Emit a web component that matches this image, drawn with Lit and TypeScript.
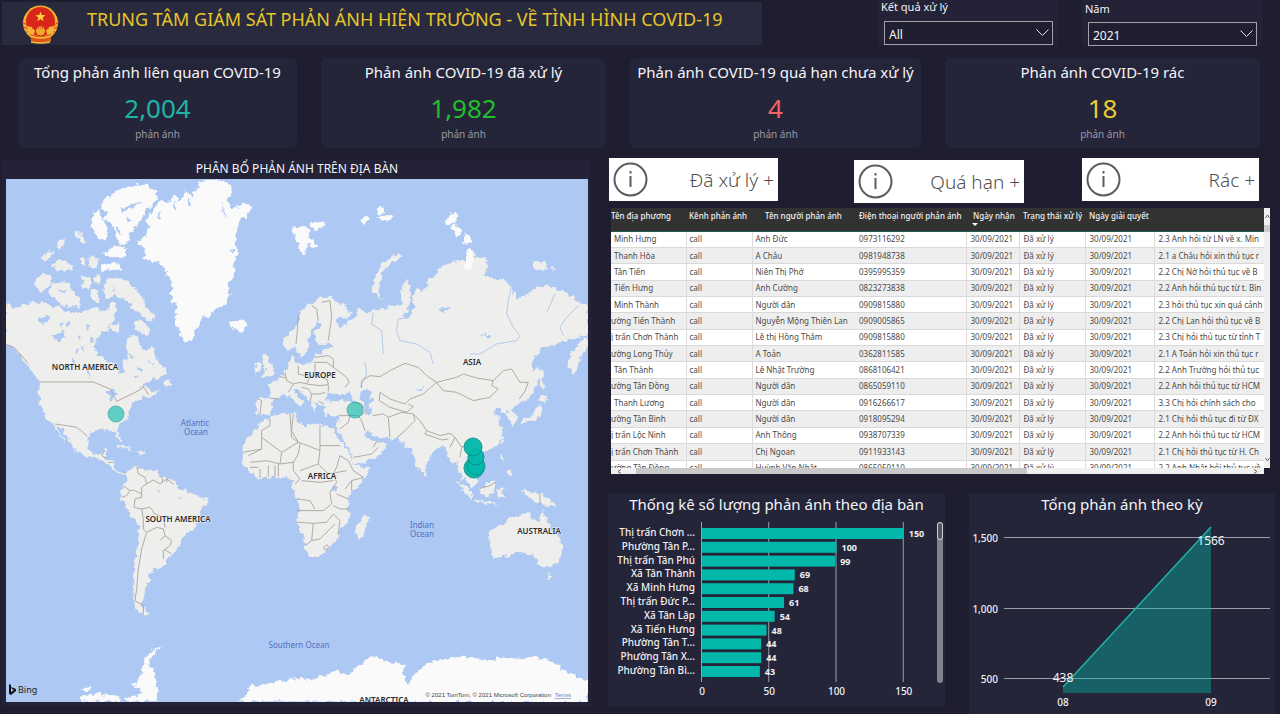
import { LitElement, html, svg, css } from "lit";
import { customElement } from "lit/decorators.js";
import { classMap } from "lit/directives/class-map.js";

/* Coastlines in map tile units (three units to one pixel of the map view). */
const LAND: string[] = [
  // North and Central America
  "18,445 30,452 45,465 60,455 80,450 100,440 115,450 135,445 160,460 175,455 195,470 225,478 250,472 285,462 305,475 320,470 330,445 345,450 350,470 340,500 330,515 320,530 300,545 285,560 283,590 300,605 325,620 345,635 360,660 372,655 370,635 368,620 385,605 380,585 375,570 385,550 405,545 415,555 425,580 440,590 455,575 462,590 465,610 480,630 498,640 500,658 480,670 455,678 430,690 415,705 432,698 450,700 448,715 470,710 480,712 460,725 440,730 430,725 415,735 400,745 392,760 385,775 388,785 378,795 365,805 355,815 352,830 358,840 364,855 360,860 345,832 325,825 300,827 275,835 268,845 262,860 265,885 285,903 305,900 315,883 325,880 322,897 315,913 330,917 345,920 348,930 342,940 352,953 370,957 380,953 378,962 365,963 350,955 335,940 325,930 300,920 280,913 255,905 235,895 220,880 215,870 200,850 190,830 180,818 172,812 172,825 185,850 198,866 192,864 176,842 160,812 145,795 128,772 118,745 115,715 120,687 100,660 85,640 70,622 60,600 40,580 18,570",
  // South America
  "380,953 395,943 410,935 418,945 430,943 470,950 480,965 505,972 520,978 535,1000 560,1013 600,1025 620,1037 618,1052 600,1075 595,1100 585,1122 560,1138 545,1152 540,1172 524,1192 512,1208 500,1213 495,1235 480,1243 465,1245 463,1257 446,1262 450,1278 435,1298 440,1312 430,1328 424,1348 435,1368 450,1380 430,1382 410,1370 402,1335 400,1295 403,1255 410,1205 415,1155 420,1115 400,1092 385,1070 372,1048 360,1030 362,1015 372,995 380,975",
  // Europe and Asia
  "990,430 1010,445 1040,460 1055,480 1045,492 1015,490 1005,500 1020,520 1035,512 1045,500 1060,495 1075,482 1070,465 1085,470 1100,478 1125,465 1150,458 1165,470 1160,455 1180,455 1200,455 1208,420 1205,395 1220,378 1230,395 1232,430 1228,460 1210,490 1225,492 1245,465 1238,420 1250,400 1265,410 1280,398 1285,375 1310,365 1315,345 1340,330 1375,320 1395,322 1420,308 1440,310 1460,315 1462,345 1450,365 1480,375 1510,375 1535,392 1550,435 1560,430 1590,420 1605,400 1635,395 1665,400 1690,415 1715,425 1735,445 1764,448 1764,540 1740,550 1700,560 1660,575 1630,580 1610,605 1590,630 1600,650 1618,640 1622,660 1605,700 1590,730 1560,745 1545,755 1532,768 1550,780 1552,800 1540,815 1527,797 1525,778 1505,772 1490,762 1478,780 1500,785 1495,805 1508,830 1506,850 1495,870 1470,885 1440,893 1425,898 1410,895 1402,910 1412,935 1428,955 1432,980 1415,1000 1402,985 1392,968 1388,990 1408,1005 1412,1022 1402,1020 1388,1000 1382,960 1370,925 1355,925 1345,905 1340,880 1325,875 1300,895 1285,915 1275,945 1262,957 1250,940 1240,910 1235,880 1222,882 1205,865 1190,855 1165,852 1130,848 1110,838 1095,835 1100,848 1115,860 1135,862 1160,870 1150,890 1125,910 1080,930 1065,930 1055,905 1040,875 1020,840 1010,822 1010,815 1018,795 1018,778 1005,785 985,785 972,770 968,752 955,748 942,745 952,762 945,775 935,757 925,737 905,717 893,703 880,705 888,722 910,740 905,750 898,757 880,738 865,722 850,718 832,735 815,745 820,762 805,780 785,783 768,775 772,730 785,728 808,732 812,710 800,692 812,684 830,680 840,668 855,655 865,640 868,612 880,606 885,625 900,630 930,628 945,612 945,600 965,600 975,582 1000,578 985,568 960,574 942,555 945,530 965,512 950,505 935,530 925,560 925,590 905,612 890,590 885,572 870,592 852,582 848,560 865,540 885,525 895,500 900,475 925,450 955,435",
  // Africa
  "800,795 815,785 850,780 885,775 892,800 905,810 920,820 940,807 965,812 1000,818 1008,842 1030,870 1050,905 1065,930 1075,942 1108,935 1105,955 1085,985 1060,1010 1045,1030 1045,1060 1050,1085 1040,1110 1017,1125 1015,1150 1000,1170 975,1195 955,1208 930,1210 920,1195 915,1165 900,1130 888,1100 897,1070 893,1040 885,1020 873,1000 878,985 860,970 830,972 800,970 780,975 760,965 745,950 725,925 728,900 728,875 745,850 765,830 780,805",
  // Australia, Tasmania, New Guinea
  "1465,1135 1490,1120 1515,1110 1530,1090 1555,1085 1570,1075 1595,1075 1590,1090 1615,1105 1627,1070 1640,1095 1650,1120 1675,1145 1690,1175 1680,1210 1665,1237 1635,1240 1615,1230 1600,1205 1585,1200 1560,1193 1530,1205 1500,1210 1480,1213 1475,1190 1466,1160",
  "1640,1258 1660,1260 1650,1280",
  "1565,1008 1590,1015 1620,1017 1650,1035 1670,1060 1640,1053 1610,1045 1585,1030",
  // South-east Asian islands
  "1438,1005 1460,995 1475,975 1490,985 1480,1015 1465,1025 1445,1020",
  "1360,973 1385,995 1420,1025 1418,1035 1390,1015",
  "1420,1038 1470,1045 1500,1055 1460,1050 1425,1045",
  "1495,1005 1515,1003 1505,1015 1510,1030 1498,1028",
  "1502,900 1512,905 1510,923 1502,917",
  "1520,950 1535,950 1535,965 1520,963",
  "1503,857 1510,863 1505,873",
  "1273,950 1282,958 1278,968 1272,962",
  // Madagascar
  "1100,1080 1105,1095 1090,1145 1075,1153 1065,1135 1072,1110 1090,1090",
  // British Isles
  "790,595 805,605 808,625 820,640 825,655 810,668 785,668 800,650 790,635 785,610",
  "768,630 785,630 780,655 765,658",
  // Novaya Zemlya, New Siberian Islands, Kamchatka, Sakhalin, Japan
  "1195,298 1210,305 1180,325 1152,345 1142,380 1135,415 1155,440 1140,430 1115,410 1128,360 1150,325",
  "1600,325 1635,320 1640,340 1615,350 1600,340",
  "1650,338 1670,345 1660,352",
  "1764,545 1745,560 1710,600 1705,640 1718,662 1730,640 1750,600 1764,575",
  "1615,645 1628,655 1632,690 1628,710 1620,680",
  "1620,720 1645,730 1630,747 1618,740",
  "1620,750 1627,770 1610,797 1585,802 1560,812 1565,798 1595,790 1610,765",
  // Canadian Arctic islands
  "115,360 145,360 160,380 140,405 120,415 108,390",
  "150,395 175,385 205,380 215,410 240,435 235,460 205,455 185,455 165,430 145,420",
  "245,370 270,370 270,410 250,400",
  "280,365 305,365 300,390 280,385",
  "275,400 295,410 295,445 275,440",
  "315,375 345,370 385,380 400,400 430,430 440,460 465,490 445,500 425,480 400,465 375,435 345,425 320,435 312,410",
  "400,510 420,495 450,520 440,545 410,530",
  "330,515 355,510 355,535 335,530",
  "225,235 245,240 265,270 240,270",
  "175,260 195,255 195,275 175,285",
  "125,315 145,290 160,290 150,315 130,325",
  "155,330 185,315 215,330 220,350 175,352",
  "240,310 255,310 260,335 240,330",
  "265,310 290,310 290,345 270,345",
  // Newfoundland, Cuba, Hispaniola
  "490,685 505,675 518,692 495,698",
  "345,873 375,873 400,890 375,884",
  "405,890 435,893 430,900",
];

const ICE: string[] = [
  // Greenland
  "440,200 460,165 490,130 500,150 520,125 540,140 560,110 575,130 600,82 650,74 690,90 697,120 680,140 700,165 735,145 755,158 735,190 712,210 705,260 715,300 700,340 705,370 680,385 692,420 670,455 640,470 610,495 590,520 575,560 555,565 540,540 525,495 530,450 512,440 520,400 510,385 495,345 475,325 430,315 440,295 410,265 440,245 450,215",
  // Ellesmere, Axel Heiberg, Devon
  "300,150 330,125 360,105 400,93 440,92 470,110 468,140 450,160 430,180 410,215 390,235 385,265 360,275 345,240 335,210 310,190 325,180",
  "280,180 295,165 310,200 325,230 320,260 295,255 275,220",
  "310,300 345,275 375,280 375,310 330,310",
  "300,335 360,325 365,350 305,350",
  // Iceland
  "690,505 705,500 735,500 742,515 725,530 705,528 692,515",
  // Svalbard and Franz Josef Land
  "880,220 910,215 930,225 925,250 940,260 955,280 935,285 925,260 915,300 900,290 885,250",
  "930,205 970,200 970,220 945,235",
  "1080,200 1105,185 1112,195 1090,210",
  "1130,165 1150,160 1155,175 1135,180",
  "1130,190 1160,180 1185,185 1165,200 1140,205",
  // Severnaya Zemlya
  "1348,175 1370,175 1373,200 1355,210 1338,210",
  "1355,215 1380,215 1385,240 1370,245 1355,230",
  "1395,240 1415,245 1410,270 1385,268",
  "1400,290 1415,285 1425,300 1415,340 1395,345",
  // Antarctica
  "495,1470 470,1490 450,1515 447,1535 462,1560 470,1595 475,1642 370,1642 400,1625 425,1620 420,1600 395,1595 410,1580 430,1555 425,1540 435,1515 455,1490",
  "240,1642 245,1625 300,1620 350,1625 360,1642",
  "245,1602 270,1600 272,1610 250,1612",
  "715,1642 740,1625 755,1590 765,1600 790,1590 830,1585 860,1575 900,1573 940,1577 1010,1550 1045,1565 1060,1545 1100,1518 1115,1508 1140,1510 1150,1520 1215,1535 1210,1570 1225,1590 1245,1560 1290,1525 1330,1515 1390,1508 1450,1515 1480,1520 1510,1508 1560,1515 1600,1508 1650,1522 1690,1545 1730,1570 1764,1580 1764,1645",
];

const WATER: string[] = [
  "975,737 985,718 1010,713 1022,727 1035,720 1045,714 1060,730 1066,745 1040,740 1005,742",
  "1085,712 1100,704 1116,710 1105,722 1120,740 1108,752 1118,780 1098,782 1090,755 1078,730",
  "320,712 335,705 352,720 340,728 335,745 325,740 328,720",
  "110,490 150,488 145,508 122,505",
  "155,548 190,530 200,548 172,562",
  "250,625 262,640 275,672 262,660",
  "995,995 1010,993 1012,1005 998,1012",
  "1315,465 1345,458 1350,468 1325,475",
  "1445,540 1475,545 1465,555",
  "1245,705 1270,700 1265,710",
  "385,600 400,606 395,618",
  "410,640 430,645 420,655",
  "455,625 470,632 460,640",
  "470,1010 485,1014 478,1018",
  "535,1025 545,1033 540,1036",
  "200,500 212,510 204,518",
  "235,540 246,552 238,560",
  "260,505 270,520 262,528",
  "225,580 238,590 228,598",
  "180,505 192,508 186,520",
  "215,610 228,620 220,630",
  "245,575 256,580 250,592",
  "270,548 280,556 272,566",
  "405,665 418,668 410,676",
  "440,615 450,620 444,628",
  // Inlets of the Arctic islands and the Greenland coast
  "360,165 400,150 432,140 402,158 366,174",
  "345,215 358,228 362,245 352,232",
  "380,190 402,196 384,200",
  "470,190 484,168 480,192",
  "520,160 526,142 530,162",
  "560,150 566,130 570,152",
  "665,140 672,170 680,195 668,176",
  "705,285 690,292 706,296",
  "170,400 190,412 205,408 190,420",
  "340,395 348,408 344,418",
];

const RIVERS: string[] = [
  "1225,492 1195,495 1190,530 1200,560 1250,570 1290,595 1300,630",
  "1535,395 1525,440 1520,480 1540,520 1560,545 1550,560 1490,570 1440,600 1410,600",
  "1095,625 1100,660 1080,700",
  "1120,475 1115,510 1145,530 1150,600",
  "1735,455 1700,490 1680,520 1690,545",
  "1665,420 1650,455 1640,475",
];

const BORDERS: string[] = [
  "118,684 280,684 330,705 350,742 400,718 432,700 445,722",
  "20,572 42,580 60,600 84,628",
  "165,810 200,815 230,820 250,835 262,848",
  "315,890 305,905 318,912 M340,925 325,925 M372,952 375,960",
  "410,938 415,960 435,970 440,990 425,1000 425,1030 405,1035 402,1060 425,1065 430,1095 430,1125 440,1135 470,1120 490,1125 495,1145 515,1160 510,1175 490,1190 490,1215",
  "440,1135 425,1185 415,1245 410,1305 405,1340 430,1355 430,1380",
  "440,990 460,978 480,990 500,975 520,990 M485,965 488,985 M502,970 500,985",
  "370,995 390,1010 400,1008 425,1020 M365,1030 380,1025 390,1010",
  "425,1065 450,1060 465,1080 490,1090 495,1120 M495,1145 480,1160 M492,1185 515,1200",
  "1085,702 1085,680 1110,665 1140,668 1170,650 1215,628 1255,640 1280,665 1310,685 1370,670 1390,660 1430,672 1480,680 1510,650 1535,645 1560,685 1585,685 1575,712 1558,735",
  "1310,685 1330,710 1370,715 1420,740 1470,730 1495,705 1475,695 1480,680",
  "1310,685 1270,720 1230,735 1215,750 1170,735 1140,715 1138,740 1170,760 1220,775 1240,758 1225,750",
  "1118,785 1150,780 1165,790 1170,850 M1165,790 1205,775 1240,780 1245,800 1215,830 1190,852",
  "1240,780 1260,800 1280,830 1320,845 1350,838 1365,850 1350,880 M1280,830 1275,840 1325,858 1345,855",
  "1365,850 1385,880 1380,910 M1385,880 1410,870 1440,890",
  "1020,785 1050,785 1075,785 1085,800 1095,830 M1050,785 1045,805 1020,825",
  "1065,745 1085,750 1095,770 1085,785",
  "1060,910 1090,905 1115,900 1135,880 M1130,862 1120,880",
  "895,480 892,530 888,570 M935,455 950,465 955,500 M965,445 990,440 995,490 985,560",
  "985,605 1000,615 1000,640 1040,670 1048,685 1035,700 M940,625 980,625 1000,640 M945,610 985,605",
  "895,635 895,660 930,668 945,665 980,675 985,690 M945,630 945,665",
  "855,655 860,680 880,690 865,715 M880,690 900,685 920,690 930,668 M840,668 858,672",
  "905,700 925,705 935,720 930,745 M935,720 960,720 975,715 M960,695 985,692 985,712 M920,690 960,695",
  "772,733 785,740 780,780 M808,732 835,735 M972,750 955,742",
  "785,830 785,885 745,905 M785,830 810,815 810,795 M785,850 845,895 895,865 875,850 870,780",
  "880,780 875,830 895,865 910,870 960,890 M960,815 960,875 1020,875 M960,875 960,890",
  "845,895 840,930 800,920 750,925 M840,930 880,925 895,900 900,870 M785,885 730,895",
  "880,925 880,950 900,975 885,990 M960,890 955,930 900,950 M955,930 985,960 1040,950",
  "780,945 780,972 M805,935 805,968 M825,935 825,970 M835,930 835,968 M750,940 775,940",
  "1020,905 1045,920 1060,950 1090,970 1055,980 1035,1005 M1055,980 1055,1010",
  "1020,905 1010,940 1000,960 1010,985 990,1015 995,1050 970,1070 890,1070 M905,980 960,985 1000,980",
  "890,1035 930,1040 945,1065 M1010,1020 1045,1035 M1000,1055 1020,1065 1048,1065",
  "890,1105 940,1108 980,1105 1000,1080 M940,1108 935,1160 915,1175 M935,1160 960,1155 990,1125 1005,1110 M1000,1080 1020,1100 1015,1140",
  "970,1183 980,1172 987,1180 978,1188 Z M1620,1017 1620,1052 M1440,1003 1470,995 1488,985",
];

const LABELS = [
  { x: 79, y: 191, t: "NORTH AMERICA" },
  { x: 314, y: 199, t: "EUROPE" },
  { x: 466, y: 186, t: "ASIA" },
  { x: 316, y: 300, t: "AFRICA" },
  { x: 172, y: 343, t: "SOUTH AMERICA" },
  { x: 533, y: 355, t: "AUSTRALIA" },
  { x: 378, y: 524, t: "ANTARCTICA" },
];

const SEAS = [
  { x: 189, y: 247, t: "Atlantic" },
  { x: 190, y: 256, t: "Ocean" },
  { x: 416, y: 349, t: "Indian" },
  { x: 416, y: 358, t: "Ocean" },
  { x: 293, y: 469, t: "Southern Ocean" },
];

const PINS = [
  { x: 110, y: 235, r: 8, o: 0.6 },
  { x: 349, y: 231, r: 8, o: 0.6 },
  { x: 468, y: 289, r: 10, o: 0.95 },
  { x: 470, y: 287, r: 9, o: 0.9 },
  { x: 470, y: 278, r: 8, o: 0.95 },
  { x: 467, y: 268, r: 9, o: 0.95 },
];

const CARDS = [
  { title: "Tổng phản ánh liên quan COVID-19", value: "2,004", tone: "teal" },
  { title: "Phản ánh COVID-19 đã xử lý", value: "1,982", tone: "green" },
  { title: "Phản ánh COVID-19 quá hạn chưa xử lý", value: "4", tone: "red" },
  { title: "Phản ánh COVID-19 rác", value: "18", tone: "yellow" },
];

const HEADS = [
  "Tên địa phương",
  "Kênh phản ánh",
  "Tên người phản ánh",
  "Điện thoại người phản ánh",
  "Ngày nhận",
  "Trạng thái xử lý",
  "Ngày giải quyết",
  "",
];

const ROWS: [string, string, string, string][] = [
  ["Minh Hưng", "Anh Đức", "0973116292", "2.3 Anh hỏi từ LN về x. Min"],
  ["Thanh Hòa", "A Châu", "0981948738", "2.1 a Châu hỏi xin thủ tục r"],
  ["Tân Tiến", "Niên Thị Phớ", "0395995359", "2.2 Chị Nớ hỏi thủ tục về B"],
  ["Tiến Hưng", "Anh Cường", "0823273838", "2.2 Anh hỏi thủ tục từ t. Bìn"],
  ["Minh Thành", "Người dân", "0909815880", "2.3 hỏi thủ tục xin quá cảnh"],
  ["ường Tiến Thành", "Nguyễn Mộng Thiên Lan", "0909005865", "2.2 Chị Lan hỏi thủ tục về B"],
  ["ị trấn Chơn Thành", "Lê thị Hồng Thắm", "0909815880", "2.3 Chị hỏi thủ tục từ tỉnh T"],
  ["ường Long Thủy", "A Toản", "0362811585", "2.1 A Toản hỏi xin thủ tục r"],
  ["Tân Thành", "Lê Nhật Trường", "0868106421", "2.2 Anh Trường hỏi thủ tục"],
  ["ường Tân Đồng", "Người dân", "0865059110", "2.2 Anh hỏi thủ tục từ HCM"],
  ["Thanh Lương", "Người dân", "0916266617", "3.3 Chị hỏi chính sách cho"],
  ["ường Tân Bình", "Người dân", "0918095294", "2.1 Chị hỏi thủ tục đi từ ĐX"],
  ["ị trấn Lộc Ninh", "Anh Thông", "0938707339", "2.2 Anh hỏi thủ tục từ HCM"],
  ["ị trấn Chơn Thành", "Chị Ngoan", "0911933143", "2.1 Chị hỏi thủ tục từ H. Ch"],
  ["ường Tân Đồng", "Huỳnh Văn Nhật", "0865059110", "2.2 Anh Nhật hỏi thủ tục về"],
];

const BARS: [string, number][] = [
  ["Thị trấn Chơn ...", 150],
  ["Phường Tân P...", 100],
  ["Thị trấn Tân Phú", 99],
  ["Xã Tân Thành", 69],
  ["Xã Minh Hưng", 68],
  ["Thị trấn Đức P...", 61],
  ["Xã Tân Lập", 54],
  ["Xã Tiến Hưng", 48],
  ["Phường Tân T...", 44],
  ["Phường Tân X...", 44],
  ["Phường Tân Bì...", 43],
];

const FONT = css`"Noto Sans", "Open Sans", sans-serif`;

@customElement("world-map")
export class WorldMap extends LitElement {
  static styles = css`
    :host {
      display: block;
    }
    svg {
      display: block;
      width: 100%;
      height: auto;
      background: #adc8f2;
      font-family: ${FONT};
    }
    .land {
      fill: #eeeeec;
    }
    .ice {
      fill: #fafafa;
    }
    .water {
      fill: #adc8f2;
    }
    .river {
      fill: none;
      stroke: #b4c9ec;
      stroke-width: 3;
    }
    .border {
      fill: none;
      stroke: #b0aaa6;
      stroke-width: 3;
      stroke-linejoin: round;
    }
    .label {
      font-size: 8px;
      font-weight: 600;
      fill: #2a2a2e;
      text-anchor: middle;
      stroke: #f4f4f2;
      stroke-width: 1;
      paint-order: stroke;
    }
    .sea {
      font-size: 8px;
      fill: #5470c4;
      text-anchor: middle;
    }
    .pin {
      fill: #01b8aa;
      stroke: #0a8f86;
      stroke-width: 1;
    }
    .bing {
      font-size: 9px;
      fill: #222;
    }
    .legal {
      font-family: "Liberation Sans", sans-serif;
      font-size: 6px;
      fill: #444;
      text-anchor: end;
    }
    .terms {
      fill: #6b7fc7;
      text-decoration: underline;
    }
  `;

  render() {
    return html`<svg viewBox="0 0 582 523" role="img" aria-label="Bản đồ phân bổ phản ánh">
      <defs>
        <filter id="coast" x="0" y="0" width="1" height="1">
          <feTurbulence type="fractalNoise" baseFrequency="0.18" numOctaves="3" seed="4" />
          <feDisplacementMap in="SourceGraphic" scale="7" xChannelSelector="R" yChannelSelector="G" />
        </filter>
      </defs>
      <g filter="url(#coast)">
        <rect class="water" width="582" height="523"></rect>
        <g transform="translate(-6 -25) scale(0.3333)">
          ${LAND.map((p) => svg`<polygon class="land" points=${p}></polygon>`)}
          ${ICE.map((p) => svg`<polygon class="ice" points=${p}></polygon>`)}
          ${WATER.map((p) => svg`<polygon class="water" points=${p}></polygon>`)}
        </g>
      </g>
      <g transform="translate(-6 -25) scale(0.3333)">
        ${RIVERS.map((p) => svg`<polyline class="river" points=${p}></polyline>`)}
        ${BORDERS.map((p) => svg`<path class="border" d=${"M" + p}></path>`)}
      </g>
      ${SEAS.map((s) => svg`<text class="sea" x=${s.x} y=${s.y}>${s.t}</text>`)}
      ${LABELS.map((s) => svg`<text class="label" x=${s.x} y=${s.y}>${s.t}</text>`)}
      ${PINS.map((p) => svg`<circle class="pin" cx=${p.x} cy=${p.y} r=${p.r} opacity=${p.o}></circle>`)}
      <path d="M3 505l2 1v7l3-2-2-1-1-2 5 2v2l-5 4-2-1z" fill="#111"></path>
      <text class="bing" x="12" y="514">Bing</text>
      <text class="legal" x="545" y="518">© 2021 TomTom, © 2021 Microsoft Corporation</text>
      <a href="#terms"><text class="legal terms" x="565" y="518">Terms</text></a>
    </svg>`;
  }
}

@customElement("district-bars")
export class DistrictBars extends LitElement {
  static styles = css`
    :host {
      display: block;
    }
    svg {
      display: block;
      width: 100%;
      height: auto;
      font-family: ${FONT};
      font-size: 10px;
      font-weight: 500;
      fill: #f0f0f4;
    }
    .grid {
      stroke: #9d9daa;
    }
    .bar {
      fill: #01b8aa;
    }
    .name {
      text-anchor: end;
    }
    .tick {
      text-anchor: middle;
    }
    .value {
      font-size: 9px;
      font-weight: 700;
    }
    .track {
      fill: #82818e;
    }
    .thumb {
      fill: #55545f;
      stroke: #d0d0d6;
    }
  `;

  render() {
    const scale = (v: number) => 94 + v * 1.345;
    return html`<svg viewBox="0 0 337 190" role="img" aria-label="Số lượng phản ánh theo địa bàn">
      ${[0, 50, 100, 150].map(
        (v) => svg`<line class="grid" x1=${scale(v) - 0.5} x2=${scale(v) - 0.5} y1="6" y2="166"></line>
          <text class="tick" x=${scale(v)} y="179">${v}</text>`
      )}
      ${BARS.map(([name, v], i) => {
        const y = 12 + i * 13.8;
        return svg`<text class="name" x="87" y=${y + 8}>${name}</text>
          <rect class="bar" x="94" y=${y} width=${scale(v) - 94} height="11"></rect>
          <text class="value" x=${scale(v) + 5} y=${y + 9}>${v}</text>`;
      })}
      <rect class="track" x="329" y="6" width="6" height="161" rx="3"></rect>
      <rect class="thumb" x="329.5" y="6.5" width="5" height="17" rx="2.5"></rect>
    </svg>`;
  }
}

@customElement("period-area")
export class PeriodArea extends LitElement {
  static styles = css`
    :host {
      display: block;
    }
    svg {
      display: block;
      width: 100%;
      height: auto;
      font-family: ${FONT};
      font-size: 10px;
      font-weight: 500;
      fill: #f0f0f4;
    }
    .grid {
      stroke: #9d9daa;
    }
    .area {
      fill: #01b8aa;
      fill-opacity: 0.4;
    }
    .line {
      fill: none;
      stroke: #1fb3a8;
      stroke-width: 1.5;
    }
    .axis {
      text-anchor: end;
    }
    .mid {
      text-anchor: middle;
    }
    .value {
      font-size: 12px;
      font-weight: 400;
      text-anchor: middle;
    }
  `;

  render() {
    const ticks: [string, number][] = [
      ["1,500", 21.5],
      ["1,000", 92.5],
      ["500", 162.5],
    ];
    return html`<svg viewBox="0 0 306 198" role="img" aria-label="Tổng phản ánh theo kỳ">
      ${ticks.map(
        ([t, y]) => svg`<line class="grid" x1="35" x2="301" y1=${y} y2=${y}></line>
          <text class="axis" x="29" y=${y + 4}>${t}</text>`
      )}
      <polygon class="area" points="94,171 242,11 242,177 94,177"></polygon>
      <polyline class="line" points="94,171 242,11"></polyline>
      <text class="value" x="94" y="166">438</text>
      <text class="value" x="242" y="29">1566</text>
      <text class="mid" x="94" y="190">08</text>
      <text class="mid" x="242" y="190">09</text>
    </svg>`;
  }
}

@customElement("app-root")
export class AppRoot extends LitElement {
  static styles = css`
    :host {
      display: block;
      box-sizing: border-box;
      min-height: 100vh;
      overflow: hidden;
      background: #1f1e30;
      color: #f4f4f8;
      font-family: ${FONT};
    }
    * {
      box-sizing: border-box;
    }
    h1,
    h2,
    p {
      margin: 0;
      font-weight: 400;
    }
    .top {
      display: grid;
      grid-template-columns: 760fr 384fr;
      column-gap: 116px;
      padding: 0 18px 0 2px;
      height: 46px;
    }
    .brand {
      display: flex;
      align-items: flex-start;
      gap: 27px;
      margin-top: 2px;
      height: 43px;
      padding: 3px 19px;
      background: #292a3e;
    }
    .brand svg {
      flex: none;
      width: 39px;
      height: 39px;
    }
    .brand h1 {
      font-size: 18px;
      line-height: 28px;
      color: #e6c629;
      white-space: nowrap;
    }
    .slicers {
      display: grid;
      grid-template-columns: 1fr 1fr;
      column-gap: 24px;
    }
    .slicer {
      background: #232236;
      padding: 0 5px 0 6px;
    }
    .slicer label {
      display: block;
      font-size: 11px;
      line-height: 13px;
      margin-left: -3px;
      padding-bottom: 8px;
    }
    .year label {
      padding-top: 2px;
      padding-bottom: 7px;
    }
    .pick {
      position: relative;
    }
    .pick select {
      display: block;
      width: 100%;
      height: 24px;
      padding: 2px 4px 0;
      appearance: none;
      border: 1px solid #a2a2ac;
      border-radius: 0;
      background: #201f30;
      color: #f4f4f8;
      font-family: inherit;
      font-size: 12px;
    }
    .pick svg {
      position: absolute;
      right: 4px;
      top: 8px;
      width: 13px;
      height: 8px;
      fill: none;
      stroke: #e0e0e6;
      pointer-events: none;
    }
    .cards {
      display: grid;
      grid-template-columns: 279fr 285fr 291fr 315fr;
      column-gap: 24px;
      padding: 12px 20px 0 18px;
    }
    .card {
      height: 90px;
      padding-top: 4px;
      border-radius: 6px;
      background: #252539;
      text-align: center;
      white-space: nowrap;
    }
    .card h2 {
      font-size: 15px;
      line-height: 20px;
    }
    .card .value {
      font-size: 26px;
      line-height: 36px;
      padding-top: 8px;
      height: 46px;
    }
    .card .unit {
      font-size: 10px;
      line-height: 12px;
      color: #9a99a6;
    }
    .teal {
      color: #1fb3a8;
    }
    .green {
      color: #1fbe2b;
    }
    .red {
      color: #f4626a;
    }
    .yellow {
      color: #efcb35;
    }
    .main {
      display: grid;
      grid-template-columns: 589fr 672fr;
      column-gap: 17px;
      align-items: start;
      padding: 10px 0 0 2px;
    }
    .map {
      margin-top: 2px;
      padding: 0 3px 4px 4px;
      background: #232237;
    }
    .map h2 {
      font-size: 12px;
      line-height: 17px;
      height: 19px;
      text-align: center;
    }
    .side {
      min-width: 0;
    }
    .actions {
      display: grid;
      grid-template-columns: 169fr 76fr 170fr 58fr 177fr;
      padding: 0 21px 0 1px;
      height: 50px;
    }
    .actions button {
      display: flex;
      align-items: center;
      justify-content: space-between;
      height: 43px;
      padding: 0 4px;
      border: 0;
      background: #fff;
      color: #505050;
      font-family: inherit;
      font-size: 19px;
      font-weight: 300;
      white-space: nowrap;
    }
    .actions button:nth-child(2) {
      grid-column: 3;
      margin-top: 2px;
    }
    .actions button:nth-child(3) {
      grid-column: 5;
    }
    .actions svg {
      width: 35px;
      height: 35px;
      fill: none;
      stroke: #5c5c5c;
      stroke-width: 2;
    }
    .records {
      display: grid;
      grid-template-columns: minmax(0, 1fr) 6px;
      grid-template-rows: 260px 6px;
      margin: 0 10px 0 3px;
    }
    .scroll {
      overflow: hidden;
      background: #fff;
    }
    table {
      width: 100%;
      height: 269px;
      table-layout: fixed;
      border-collapse: collapse;
      font-size: 8px;
      line-height: 12px;
      color: #4a4a4a;
    }
    th {
      height: 23px;
      padding: 2px 0 0 3px;
      background: #323232;
      color: #f2f2f2;
      border-bottom: 1px solid #1d5c56;
      font-weight: 500;
      text-align: left;
      vertical-align: top;
      white-space: nowrap;
    }
    th:first-child {
      padding-left: 0;
    }
    th:nth-child(3) {
      padding-left: 13px;
    }
    th:nth-child(5) {
      padding-left: 6px;
      position: relative;
    }
    .sort {
      position: absolute;
      left: 5px;
      top: 15px;
      border: 3px solid transparent;
      border-top-color: #fff;
    }
    td {
      padding: 0 0 0 3px;
      white-space: nowrap;
      border-right: 1px solid #dcdcdc;
    }
    td.cut {
      padding-left: 0;
    }
    td:nth-child(3),
    td:nth-child(8) {
      border-right: 0;
    }
    tbody tr:nth-child(even) {
      background: #eee;
    }
    tbody tr {
      border-bottom: 1px solid #d9d9d9;
    }
    .vbar {
      display: flex;
      flex-direction: column;
      align-items: center;
      justify-content: space-between;
      padding: 6px 0;
      background: #f0f0f0;
    }
    .vbar i {
      width: 6px;
      height: 7px;
      margin: 6px 0 auto;
      background: #cacaca;
    }
    .hbar {
      display: flex;
      align-items: center;
      justify-content: space-between;
      padding: 0 6px;
      background: #f0f0f0;
    }
    .hbar i {
      width: 61%;
      height: 6px;
      margin: 0 auto 0 14px;
      background: #c8c8c8;
    }
    .arrow {
      width: 5px;
      height: 5px;
      fill: none;
      stroke: #666;
    }
    .charts {
      display: grid;
      grid-template-columns: 337fr 306fr;
      column-gap: 24px;
      align-items: start;
      padding: 19px 5px 0 0;
    }
    .panel {
      background: #252539;
    }
    .panel h2 {
      font-size: 15px;
      line-height: 23px;
      text-align: center;
      white-space: nowrap;
    }
  `;

  private chevron() {
    return html`<svg viewBox="0 0 13 8" aria-hidden="true"><path d="M.5 .5l6 6 6-6"></path></svg>`;
  }

  private emblem() {
    const teeth = Array.from({ length: 9 }, (_, i) => i);
    return html`<svg viewBox="0 0 39 39" aria-hidden="true">
      <path d="M10 27h19l1 9q-10 4-20 0z" fill="#e3a02c"></path>
      <circle cx="19.500" cy="18" r="17.500" fill="#f2ae2e"></circle>
      <circle cx="19.500" cy="16.500" r="14.500" fill="#d9261c"></circle>
      <path
        d="M19.500 6.500l1.300 3.600 3.800.1-3 2.400 1.100 3.700-3.200-2.200-3.200 2.200 1.100-3.700-3-2.400 3.800-.1z"
        fill="#ffd23b"
      ></path>
      <path
        d="M1 17l5 3M2 22l6 2M5 27l6 0M38 17l-5 3M37 22l-6 2M34 27l-6 0"
        stroke="#d9402a"
        fill="none"
      ></path>
      <path d="M6 21l5 1 3 4 -2 5-5-3z M33 21l-5 1-3 4 2 5 5-3z" fill="#f2b53a"></path>
      <circle cx="19.500" cy="26" r="5" fill="#f0a92c" stroke="#c9301f"></circle>
      ${teeth.map((i) => svg`<circle cx=${11.5 + i * 2} cy="23" r="0.6" fill="#d9261c"></circle>`)}
      <path d="M9 29q10.500 4 21 0l-1 7q-9.500 3-19 0z" fill="#e0521f"></path>
      <path d="M9 31q10.500 4 21 0M10 37q9.500 2 19 0" stroke="#f2c23a" fill="none" stroke-width="1.500"></path>
    </svg>`;
  }

  private action(label: string) {
    return html`<button type="button">
      <svg viewBox="0 0 35 35" aria-hidden="true">
        <circle cx="17.500" cy="17.500" r="16"></circle>
        <path d="M17.500 14v11M17.500 9v2.500"></path>
      </svg>
      <span>${label}</span>
    </button>`;
  }

  render() {
    return html`
      <header class="top">
        <div class="brand">
          ${this.emblem()}
          <h1>TRUNG TÂM GIÁM SÁT PHẢN ÁNH HIỆN TRƯỜNG - VỀ TÌNH HÌNH COVID-19</h1>
        </div>
        <div class="slicers">
          <div class="slicer">
            <label for="result">Kết quả xử lý</label>
            <div class="pick">
              <select id="result"><option>All</option></select>${this.chevron()}
            </div>
          </div>
          <div class="slicer year">
            <label for="year">Năm</label>
            <div class="pick">
              <select id="year"><option>2021</option></select>${this.chevron()}
            </div>
          </div>
        </div>
      </header>
      <section class="cards">
        ${CARDS.map(
          (c) => html`<article class="card">
            <h2>${c.title}</h2>
            <p class=${classMap({ value: true, [c.tone]: true })}>${c.value}</p>
            <p class="unit">phản ánh</p>
          </article>`
        )}
      </section>
      <main class="main">
        <section class="map">
          <h2>PHÂN BỔ PHẢN ÁNH TRÊN ĐỊA BÀN</h2>
          <world-map></world-map>
        </section>
        <div class="side">
          <nav class="actions">
            ${this.action("Đã xử lý +")}${this.action("Quá hạn +")}${this.action("Rác +")}
          </nav>
          <div class="records">
            <div class="scroll">
              <table>
                <colgroup>
                  ${[75, 66, 104, 111, 53, 66, 69, 109].map(
                    (w) => html`<col style="width:${(w / 6.53).toFixed(2)}%" />`
                  )}
                </colgroup>
                <thead>
                  <tr>
                    ${HEADS.map(
                      (h, i) => html`<th scope="col">${h}${i === 4 ? html`<span class="sort"></span>` : null}</th>`
                    )}
                  </tr>
                </thead>
                <tbody>
                  ${ROWS.map(
                    ([place, who, phone, note]) => html`<tr>
                      <td class=${classMap({ cut: /^[ưị]/.test(place) })}>${place}</td>
                      <td>call</td>
                      <td>${who}</td>
                      <td>${phone}</td>
                      <td>30/09/2021</td>
                      <td>Đã xử lý</td>
                      <td>30/09/2021</td>
                      <td>${note}</td>
                    </tr>`
                  )}
                </tbody>
              </table>
            </div>
            <div class="vbar">
              <svg class="arrow" viewBox="0 0 5 5"><path d="M.5 4l2-3 2 3"></path></svg>
              <i></i>
              <svg class="arrow" viewBox="0 0 5 5"><path d="M.5 1l2 3 2-3"></path></svg>
            </div>
            <div class="hbar">
              <svg class="arrow" viewBox="0 0 5 5"><path d="M4 .5l-3 2 3 2"></path></svg>
              <i></i>
              <svg class="arrow" viewBox="0 0 5 5"><path d="M1 .5l3 2-3 2"></path></svg>
            </div>
          </div>
          <div class="charts">
            <section class="panel">
              <h2>Thống kê số lượng phản ánh theo địa bàn</h2>
              <district-bars></district-bars>
            </section>
            <section class="panel">
              <h2>Tổng phản ánh theo kỳ</h2>
              <period-area></period-area>
            </section>
          </div>
        </div>
      </main>
    `;
  }
}
